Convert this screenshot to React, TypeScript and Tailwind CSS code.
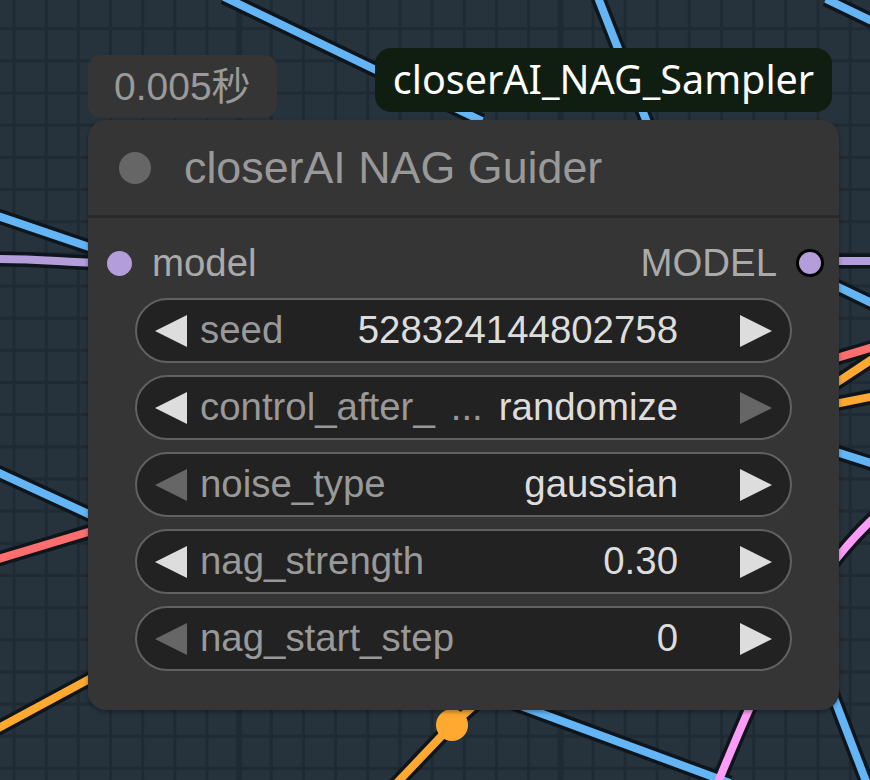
import React from "react";

const W = 870;
const H = 780;

function Grid() {
  const items: React.ReactElement[] = [];
  const p = 32.16;
  for (let k = 0; k < 28; k++) {
    const x = 14 + p * k;
    const thick = k % 10 === 7;
    const w = thick ? 6 : 3;
    items.push(<rect key={"v" + k} x={x - w / 2} y={0} width={w} height={H} fill="#1f2b34" />);
  }
  for (let k = 0; k < 26; k++) {
    const y = 28.7 + p * k;
    items.push(<rect key={"h" + k} x={0} y={y - 1.5} width={W} height={3} fill="#1f2b34" />);
  }
  return <>{items}</>;
}

const BLUE = "#64b5f6";
const LAV = "#b39ddb";
const RED = "#ff6e6e";
const ORANGE = "#ffa931";
const PINK = "#ff9cf9";

const wires: { d: string; c: string }[] = [
  { d: "M 597 -5 L 650 130", c: BLUE },
  { d: "M 224 -3 L 482 121", c: BLUE },
  { d: "M 826 -1 L 880 25", c: BLUE },
  { d: "M -5 215 L 95 249", c: BLUE },
  { d: "M -5 259 C 40 259, 60 262, 100 263", c: LAV },
  { d: "M -5 471 L 95 517", c: BLUE },
  { d: "M -5 560 L 95 530", c: RED },
  { d: "M -5 730 L 95 676", c: ORANGE },
  { d: "M 393 787 L 452 725 L 478 702", c: ORANGE },
  { d: "M 480 691 L 730 783", c: BLUE },
  { d: "M 826 677 L 872 797", c: BLUE },
  { d: "M 714 792 C 760 680, 800 585, 880 512", c: PINK },
  { d: "M 822 261 L 880 261", c: LAV },
  { d: "M 830 283 L 880 307", c: BLUE },
  { d: "M 830 360 L 880 345", c: RED },
  { d: "M 830 387 L 880 354", c: ORANGE },
  { d: "M 830 405 L 880 395", c: ORANGE },
  { d: "M 830 450 L 880 466", c: BLUE },
];

function Tri({ dir, on }: { dir: "l" | "r"; on: boolean }) {
  return (
    <svg width="32" height="32" viewBox="0 0 32 32" className="shrink-0">
      <polygon
        points={dir === "l" ? "0,16 32,0 32,32" : "32,16 0,0 0,32"}
        fill={on ? "#dddddd" : "#666666"}
      />
    </svg>
  );
}

function Widget({
  label,
  value,
  left,
  right,
  dots,
}: {
  label: string;
  value: string;
  left: boolean;
  right: boolean;
  dots?: boolean;
}) {
  return (
    <div className="h-[65px] rounded-full border-2 border-[#616161] bg-[#222222] flex items-center pl-[18px] pr-[18px]">
      <Tri dir="l" on={left} />
      <span className="ml-[13px] text-[#999999] whitespace-nowrap">{label}</span>
      {dots && <span className="ml-[16px] text-[#999999]">...</span>}
      <span className="flex-1 text-right text-[#dddddd] whitespace-nowrap">{value}</span>
      <span className="w-[62px] shrink-0" />
      <Tri dir="r" on={right} />
    </div>
  );
}

export default function App() {
  return (
    <div className="relative w-[870px] h-[780px] overflow-hidden bg-[#26333d] font-['Liberation_Sans',Arial,sans-serif]">
      <svg className="absolute inset-0" width={W} height={H} viewBox={`0 0 ${W} ${H}`}>
        <Grid />
        {wires.map((w, i) => (
          <path key={"b" + i} d={w.d} stroke="#0e151b" strokeWidth={15} fill="none" />
        ))}
        {wires.map((w, i) => (
          <path key={"c" + i} d={w.d} stroke={w.c} strokeWidth={8} fill="none" />
        ))}
        <circle cx={452} cy={725} r={16} fill={ORANGE} />
      </svg>

      {/* time badge */}
      <div className="absolute left-[88px] top-[55px] w-[189px] h-[63px] rounded-[13px] bg-[#353535] flex items-center pl-[26px] text-[39px] leading-none text-[#9a9a9a] font-['Liberation_Sans','Noto_Sans_CJK_SC',sans-serif]">
        0.005秒
      </div>

      {/* group/sampler badge */}
      <div className="absolute left-[375px] top-[48px] w-[457px] h-[64px] rounded-[16px] bg-[#0f1e11] flex items-center justify-center text-white text-[39.5px] leading-none font-['Noto_Sans',sans-serif]">
        closerAI_NAG_Sampler
      </div>

      {/* node */}
      <div className="absolute left-[88px] top-[120px] w-[751px] h-[590px] rounded-[18px] bg-[#353535] shadow-[0_2px_4px_rgba(0,0,0,0.35)] flex flex-col text-[38.4px] leading-none">
        <div className="h-[98px] border-b-[3px] border-[#2a2a2a] flex items-center pl-[31px] shrink-0">
          <div className="w-[32px] h-[32px] rounded-full bg-[#666666]" />
          <span className="ml-[33px] text-[44.8px] text-[#999999]">closerAI NAG Guider</span>
        </div>

        <div className="mt-[13px] h-[64px] flex items-center pl-[19px] pr-[15px] shrink-0">
          <div className="w-[25px] h-[25px] rounded-full bg-[#b39ddb]" />
          <span className="ml-[20px] text-[#aaaaaa]">model</span>
          <span className="flex-1" />
          <span className="text-[#aaaaaa]">MODEL</span>
          <div className="ml-[19px] w-[28px] h-[28px] rounded-full bg-[#b39ddb] border-[3px] border-black" />
        </div>

        <div className="mt-[3px] flex flex-col gap-[12px] px-[47px]">
          <Widget label="seed" value="528324144802758" left right />
          <Widget label="control_after_" value="randomize" left right={false} dots />
          <Widget label="noise_type" value="gaussian" left={false} right />
          <Widget label="nag_strength" value="0.30" left right />
          <Widget label="nag_start_step" value="0" left={false} right />
        </div>
      </div>
    </div>
  );
}
